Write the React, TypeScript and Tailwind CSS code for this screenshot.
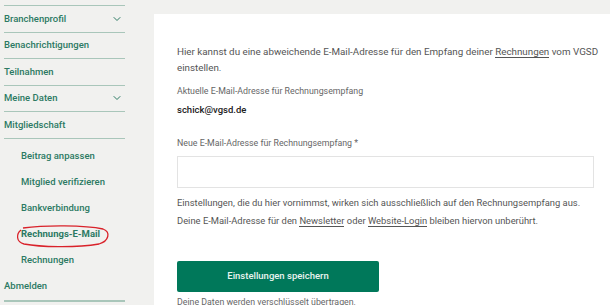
import { ChevronDown } from 'lucide-react'

const mainNav = [
  { label: 'Branchenprofil', chevron: true },
  { label: 'Benachrichtigungen' },
  { label: 'Teilnahmen' },
  { label: 'Meine Daten', chevron: true },
  { label: 'Mitgliedschaft' },
]

const subNav = ['Beitrag anpassen', 'Mitglied verifizieren', 'Bankverbindung', 'Rechnungs-E-Mail', 'Rechnungen']

export default function App() {
  return (
    <div className="flex h-[305px] w-[610px] overflow-hidden bg-[#f1f1ef] font-['Roboto',sans-serif]">
      {/* Sidebar */}
      <aside className="w-[154px] shrink-0 pl-[4px] pt-[5px]">
        <div className="w-[121px] border-t border-[#a9c6ba]">
          {mainNav.map((item) => (
            <div
              key={item.label}
              className="flex h-[26.5px] items-center justify-between border-b border-[#a9c6ba] pr-[2px] text-[9.5px] font-medium text-[#2c7a63]"
            >
              <span>{item.label}</span>
              {item.chevron && <ChevronDown size={12} strokeWidth={2} className="text-[#2c7a63]" />}
            </div>
          ))}
          <div className="pt-[5px]">
            {subNav.map((s) => (
              <div key={s} className="relative flex h-[26px] items-center pl-[17px] text-[9.5px] font-medium text-[#2c7a63]">
                <span className={s === 'Rechnungs-E-Mail' ? 'font-bold' : ''}>{s}</span>
                {s === 'Rechnungs-E-Mail' && (
                  <svg className="absolute left-[11px] top-[2px]" width="96" height="24" viewBox="0 0 96 24">
                    <path
                      d="M8 4 C30 1 70 1 88 5 C96 8 94 17 84 20 C60 24 25 23 9 20 C1 18 1 10 6 6"
                      fill="none"
                      stroke="#d9222a"
                      strokeWidth="1.3"
                    />
                  </svg>
                )}
              </div>
            ))}
          </div>
          <div className="flex h-[28px] items-center border-b-[2px] border-[#a9c6ba] text-[9.5px] font-medium text-[#2c7a63]">Abmelden</div>
        </div>
      </aside>

      {/* Main */}
      <main className="flex flex-1 flex-col pt-[4px]">
        <div className="h-[2px] bg-[#d6d6d4]" />
        <div className="mt-[10px] flex-1 bg-white pl-[23px] pr-[8px] pt-[30px] text-[#555]">
          <p className="text-[9.8px] leading-[16px]">
            Hier kannst du eine abweichende E-Mail-Adresse für den Empfang deiner{' '}
            <span className="border-b border-[#555]">Rechnungen</span> vom VGSD einstellen.
          </p>
          <div className="mt-[9px] text-[8.8px] text-[#666]">Aktuelle E-Mail-Adresse für Rechnungsempfang</div>
          <div className="mt-[5px] text-[9.5px] font-medium text-[#222]">schick@vgsd.de</div>
          <div className="mt-[20px] text-[8.8px] text-[#666]">Neue E-Mail-Adresse für Rechnungsempfang *</div>
          <div className="mt-[5px] h-[32px] w-[417px] border border-[#e3e3e3] bg-white" />
          <p className="mt-[6px] text-[9.4px] leading-[18px]">
            Einstellungen, die du hier vornimmst, wirken sich ausschließlich auf den Rechnungsempfang aus.
            <br />
            Deine E-Mail-Adresse für den <span className="border-b border-[#555]">Newsletter</span> oder{' '}
            <span className="border-b border-[#555]">Website-Login</span> bleiben hiervon unberührt.
          </p>
          <button className="mt-[31px] flex h-[31px] w-[202px] items-center justify-center rounded-[2px] bg-[#00785a] text-[9.5px] font-medium text-[#e8f3ef]">
            Einstellungen speichern
          </button>
          <div className="mt-[4px] text-[8.8px] text-[#666]">Deine Daten werden verschlüsselt übertragen.</div>
        </div>
      </main>
    </div>
  )
}
